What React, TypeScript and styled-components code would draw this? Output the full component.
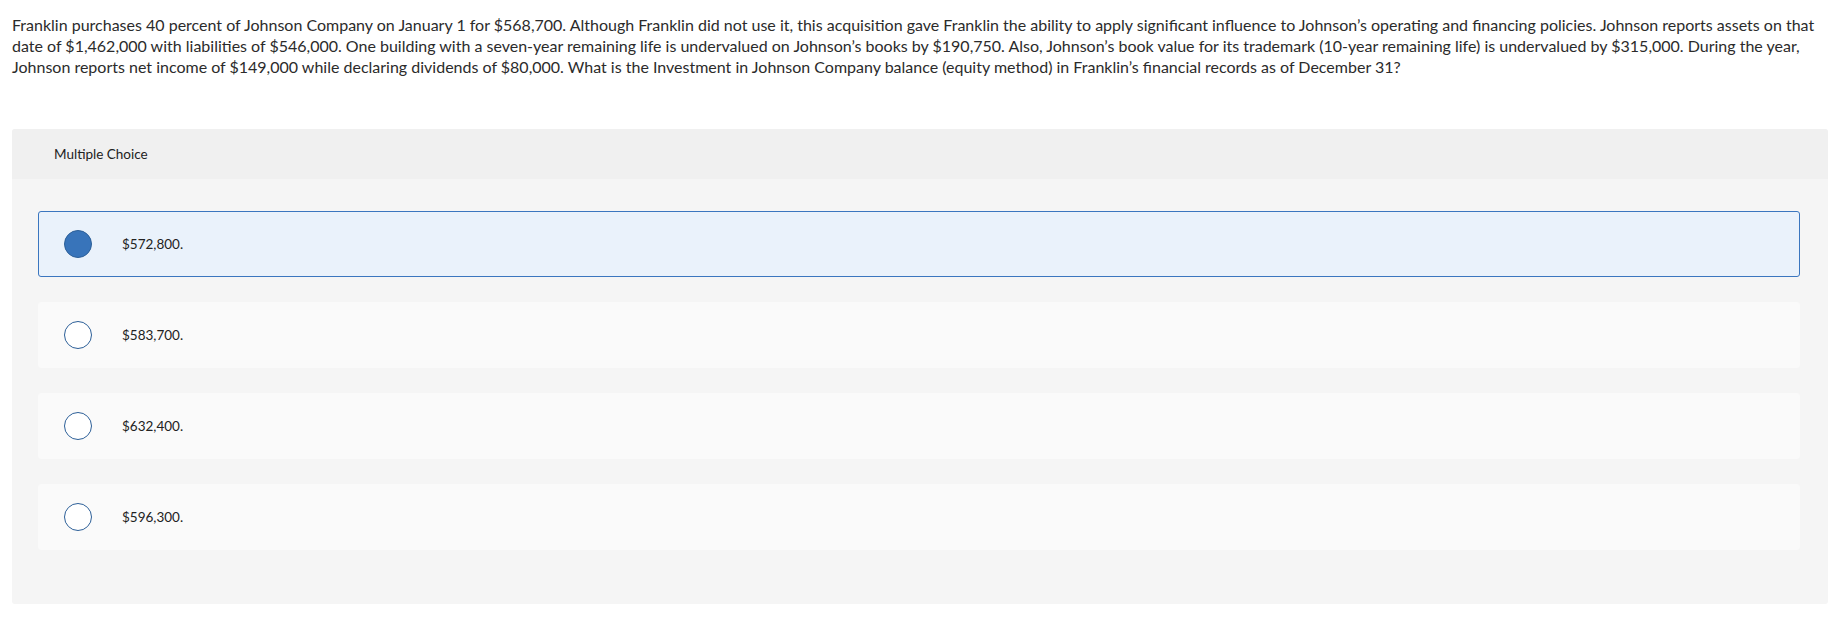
import React from "react";
import styled, { createGlobalStyle } from "styled-components";

const GlobalStyle = createGlobalStyle`
  html, body {
    margin: 0;
    padding: 0;
    background: #fff;
  }
  body {
    font-family: Lato, "Open Sans", sans-serif;
    color: #333;
  }
`;

const Page = styled.div`
  padding: 14px 7px 0 12px;
`;

const Question = styled.p`
  margin: 0 0 52px 0;
  font-size: 16px;
  line-height: 21px;
  color: #2b2b2b;
`;

const Panel = styled.div`
  width: 1816px;
  background: #f5f5f5;
  border-radius: 3px;
  padding-bottom: 54px;
`;

const PanelHeader = styled.div`
  height: 50px;
  display: flex;
  align-items: center;
  padding-left: 42px;
  background: #f0f0f0;
  border-radius: 3px 3px 0 0;
  font-size: 13.5px;
  color: #222;
`;

const Options = styled.div`
  display: flex;
  flex-direction: column;
  gap: 25px;
  padding: 32px 28px 0 26px;
`;

interface IOptionProps {
  selected: boolean;
}

const Option = styled("label")<IOptionProps>`
  box-sizing: border-box;
  height: 66px;
  display: flex;
  align-items: center;
  padding-left: 25px;
  border-radius: 3px;
  background: ${props => (props.selected ? "#eaf2fb" : "#fafafa")};
  border: 1px solid ${props => (props.selected ? "#3b76bf" : "#fafafa")};
  cursor: pointer;
`;

const Radio = styled("span")<IOptionProps>`
  box-sizing: border-box;
  width: 28px;
  height: 28px;
  border-radius: 50%;
  border: 1.5px solid #2c5f98;
  background: ${props => (props.selected ? "#3874ba" : "#fff")};
  flex-shrink: 0;
`;

const OptionText = styled.span`
  margin-left: 30px;
  font-size: 13.5px;
  color: #222;
`;

const choices = ["$572,800.", "$583,700.", "$632,400.", "$596,300."];

export default function App() {
  const selected = 0;
  return (
    <Page>
      <GlobalStyle />
      <Question>
        Franklin purchases 40 percent of Johnson Company on January 1 for
        $568,700. Although Franklin did not use it, this acquisition gave
        Franklin the ability to apply significant influence to Johnson’s
        operating and financing policies. Johnson reports assets on that date of
        $1,462,000 with liabilities of $546,000. One building with a seven-year
        remaining life is undervalued on Johnson’s books by $190,750. Also,
        Johnson’s book value for its trademark (10-year remaining life) is
        undervalued by $315,000. During the year, Johnson reports net income of
        $149,000 while declaring dividends of $80,000. What is the Investment in
        Johnson Company balance (equity method) in Franklin’s financial records
        as of December 31?
      </Question>
      <Panel>
        <PanelHeader>Multiple Choice</PanelHeader>
        <Options>
          {choices.map((choice, index) => (
            <Option key={choice} selected={index === selected}>
              <Radio selected={index === selected} />
              <OptionText>{choice}</OptionText>
            </Option>
          ))}
        </Options>
      </Panel>
    </Page>
  );
}
